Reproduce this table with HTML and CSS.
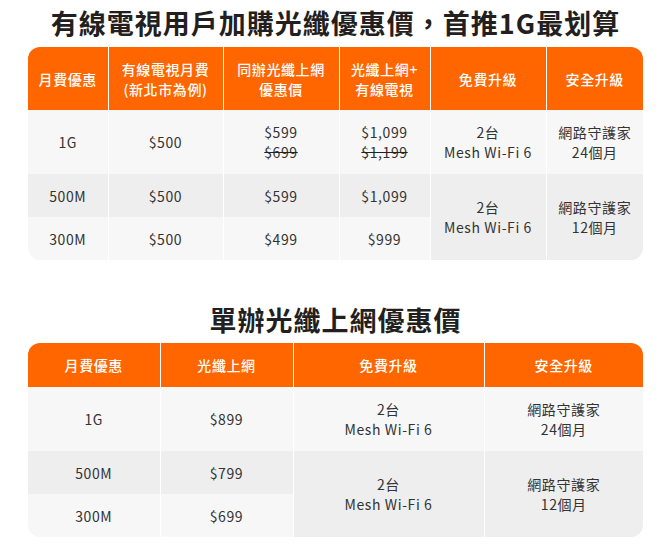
FILE: index.html
```html
<!DOCTYPE html>
<html lang="zh-Hant">
<head>
<meta charset="utf-8">
<link rel="stylesheet" href="styles.css">
</head>
<body>
<div class="page">
  <h2 class="title">有線電視用戶加購光纖優惠價，首推1G最划算</h2>
  <div class="table-wrap">
    <table class="plan t1">
      <colgroup>
        <col style="width:80px"><col style="width:115px"><col style="width:116px"><col style="width:91px"><col style="width:116px"><col style="width:97px">
      </colgroup>
      <thead>
        <tr class="head2">
          <th>月費優惠</th>
          <th>有線電視月費<br>(新北市為例)</th>
          <th>同辦光纖上網<br>優惠價</th>
          <th>光纖上網+<br>有線電視</th>
          <th>免費升級</th>
          <th>安全升級</th>
        </tr>
      </thead>
      <tbody>
        <tr class="tall light">
          <td>1G</td>
          <td>$500</td>
          <td>$599<br><s>$699</s></td>
          <td>$1,099<br><s>$1,199</s></td>
          <td>2台<br>Mesh Wi-Fi 6</td>
          <td>網路守護家<br>24個月</td>
        </tr>
        <tr class="short dark">
          <td>500M</td>
          <td>$500</td>
          <td>$599</td>
          <td>$1,099</td>
          <td rowspan="2" class="merged">2台<br>Mesh Wi-Fi 6</td>
          <td rowspan="2" class="merged">網路守護家<br>12個月</td>
        </tr>
        <tr class="short light">
          <td>300M</td>
          <td>$500</td>
          <td>$499</td>
          <td>$999</td>
        </tr>
      </tbody>
    </table>
  </div>

  <h2 class="title title2">單辦光纖上網優惠價</h2>
  <div class="table-wrap">
    <table class="plan t2">
      <colgroup>
        <col style="width:132px"><col style="width:133px"><col style="width:191px"><col style="width:159px">
      </colgroup>
      <thead>
        <tr class="head1">
          <th>月費優惠</th>
          <th>光纖上網</th>
          <th>免費升級</th>
          <th>安全升級</th>
        </tr>
      </thead>
      <tbody>
        <tr class="tall light">
          <td>1G</td>
          <td>$899</td>
          <td>2台<br>Mesh Wi-Fi 6</td>
          <td>網路守護家<br>24個月</td>
        </tr>
        <tr class="short dark">
          <td>500M</td>
          <td>$799</td>
          <td rowspan="2" class="merged">2台<br>Mesh Wi-Fi 6</td>
          <td rowspan="2" class="merged">網路守護家<br>12個月</td>
        </tr>
        <tr class="short light">
          <td>300M</td>
          <td>$699</td>
        </tr>
      </tbody>
    </table>
  </div>
</div>
</body>
</html>
```

FILE: styles.css
```css
html, body {
  margin: 0;
  padding: 0;
  background: #ffffff;
}
body {
  font-family: "Noto Sans CJK TC", "Noto Sans", sans-serif;
  color: #333333;
}
.page {
  padding: 0 19px 0 28px;
}
.title {
  margin: 0;
  height: 47px;
  line-height: 46px;
  text-align: center;
  font-size: 27px;
  font-weight: 700;
  letter-spacing: 1px;
  color: #231f20;
}
.title2 {
  margin-top: 40px;
  height: 43px;
  line-height: 40px;
}
.table-wrap {
  border-radius: 12px;
  overflow: hidden;
  width: 615px;
}
.plan {
  width: 615px;
  table-layout: fixed;
  border-collapse: collapse;
  font-size: 14px;
  line-height: 20px;
}
.plan th {
  background: #ff6600;
  color: #ffffff;
  font-weight: 500;
  letter-spacing: 0.6px;
  text-align: center;
  vertical-align: middle;
  padding: 0;
  border-left: 1px solid #ffffff;
}
.plan td {
  text-align: center;
  vertical-align: middle;
  padding: 0;
  border-left: 1px solid #ffffff;
  color: #333333;
  letter-spacing: 0.6px;
}
.plan th:first-child,
.plan tr td:first-child {
  border-left: none;
}
.plan .merged {
  border-left: 1px solid #ffffff;
  background: #eeeeee;
}
.head2 { height: 63px; }
.head1 { height: 44px; }
.tall { height: 64px; }
.short { height: 43px; }
.light td { background: #f7f7f7; }
.dark td { background: #eeeeee; }
.light td.merged, .dark td.merged { background: #eeeeee; }
s {
  text-decoration: line-through;
  text-decoration-color: #222;
}
```
